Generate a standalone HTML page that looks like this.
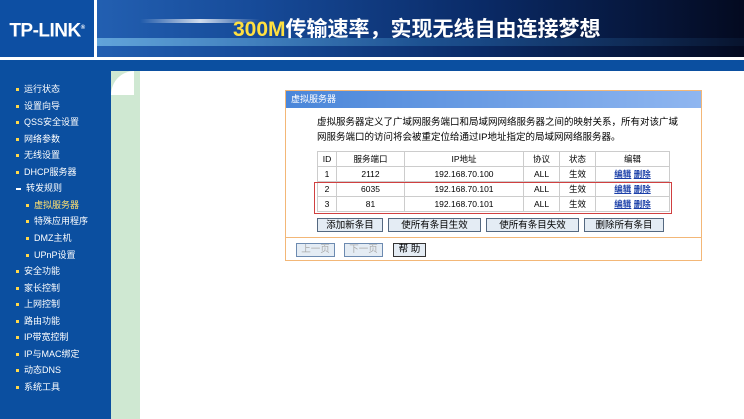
<!DOCTYPE html><html><head><meta charset="utf-8"><style>
body{margin:0;width:744px;height:419px;overflow:hidden;background:#fff;font-family:"Liberation Sans","Noto Sans CJK SC",sans-serif;position:relative}
.a{position:absolute}
#hd{left:0;top:0;width:744px;height:57px;background:linear-gradient(90deg,#2a6cc0 0%,#164a98 35%,#0a2a66 65%,#040a20 100%)}
#logo{left:0;top:0;width:97px;height:57px;background:#0d4fa3;border-right:3px solid #fff;box-sizing:border-box;color:#fff;font-weight:bold;font-size:19px;line-height:57px;text-align:center;letter-spacing:-0.5px}
#bar{left:0;top:60px;width:744px;height:11px;background:#0b4fa0}
#side{left:0;top:71px;width:111px;height:348px;background:#0b4fa0}
#green{left:111px;top:71px;width:29px;height:348px;background:#cfe8d2}
#corner{left:111px;top:71px;width:23px;height:24px;background:#fff;border-top-left-radius:23px 24px}
.m{position:absolute;font-size:9px;color:#fff;white-space:nowrap}
.m b{display:inline-block;width:3px;height:3px;background:#ffd84a;margin-right:5px;vertical-align:middle}
#panel{left:285px;top:90px;width:415px;height:169px;border:1px solid #f3b777;background:#fff}
#ttl{left:0;top:0;width:415px;height:17px;background:linear-gradient(90deg,#4a86d9,#8fb6f0);color:#fff;font-size:9px;line-height:17px;padding-left:5px;box-sizing:border-box}
.tx{font-size:9.5px;color:#000;line-height:15px}
table{border-collapse:collapse;font-size:8.5px;position:absolute;left:31px;top:60px;width:353px}
td{border:1px solid #ccc;height:14px;padding:0;text-align:center;color:#000}
a{color:#1b3fa8;text-decoration:underline;font-weight:bold}
.bt{position:absolute;top:127px;height:14px;border:1px solid #546880;background:#e4ecf4;font-size:9.5px;text-align:center;line-height:13px;box-sizing:border-box}
.b2{position:absolute;top:152px;height:14px;border:1px solid #6c8ab0;background:#e4ecf4;font-size:9.5px;text-align:center;line-height:12px;box-sizing:border-box}
</style></head><body>
<div class="a" id="hd"></div>
<div class="a" style="left:97px;top:38px;width:647px;height:8px;background:linear-gradient(90deg,rgba(140,210,245,.6),rgba(60,140,200,.35),rgba(40,100,160,.1))"></div>
<div class="a" style="left:140px;top:19px;width:120px;height:4px;background:linear-gradient(90deg,transparent,rgba(255,255,255,.8),transparent)"></div>
<div class="a" id="logo">TP-LINK<sup style="font-size:6px">®</sup></div>
<div class="a" style="left:233px;top:13px;font-size:21px;font-weight:bold;color:#fff;white-space:nowrap"><span style="color:#ffe040">300M</span>传输速率，实现无线自由连接梦想</div>
<div class="a" id="bar"></div>
<div class="a" id="side"></div>
<div class="a" id="green"></div>
<div class="a" id="corner"></div>
<div class="m" style="left:16px;top:82px"><b></b>运行状态</div>
<div class="m" style="left:16px;top:99px"><b></b>设置向导</div>
<div class="m" style="left:16px;top:115px"><b></b>QSS安全设置</div>
<div class="m" style="left:16px;top:132px"><b></b>网络参数</div>
<div class="m" style="left:16px;top:148px"><b></b>无线设置</div>
<div class="m" style="left:16px;top:165px"><b></b>DHCP服务器</div>
<div class="m" style="left:16px;top:181px"><b style="width:5px;height:2px;background:#fff"></b>转发规则</div>
<div class="m" style="left:26px;top:198px;color:#ffe070"><b></b>虚拟服务器</div>
<div class="m" style="left:26px;top:214px"><b></b>特殊应用程序</div>
<div class="m" style="left:26px;top:231px"><b></b>DMZ主机</div>
<div class="m" style="left:26px;top:248px"><b></b>UPnP设置</div>
<div class="m" style="left:16px;top:264px"><b></b>安全功能</div>
<div class="m" style="left:16px;top:281px"><b></b>家长控制</div>
<div class="m" style="left:16px;top:297px"><b></b>上网控制</div>
<div class="m" style="left:16px;top:314px"><b></b>路由功能</div>
<div class="m" style="left:16px;top:330px"><b></b>IP带宽控制</div>
<div class="m" style="left:16px;top:347px"><b></b>IP与MAC绑定</div>
<div class="m" style="left:16px;top:363px"><b></b>动态DNS</div>
<div class="m" style="left:16px;top:380px"><b></b>系统工具</div>
<div class="a" id="panel">
<div class="a" id="ttl">虚拟服务器</div>
<div class="a tx" style="left:31px;top:24px;width:370px">虚拟服务器定义了广域网服务端口和局域网网络服务器之间的映射关系，所有对该广域网服务端口的访问将会被重定位给通过IP地址指定的局域网网络服务器。</div>
<table>
<tr><td style="width:18px">ID</td><td style="width:67px">服务端口</td><td style="width:118px">IP地址</td><td style="width:35px">协议</td><td style="width:35px">状态</td><td>编辑</td></tr>
<tr><td>1</td><td>2112</td><td>192.168.70.100</td><td>ALL</td><td>生效</td><td><a>编辑</a> <a>删除</a></td></tr>
<tr><td>2</td><td>6035</td><td>192.168.70.101</td><td>ALL</td><td>生效</td><td><a>编辑</a> <a>删除</a></td></tr>
<tr><td>3</td><td>81</td><td>192.168.70.101</td><td>ALL</td><td>生效</td><td><a>编辑</a> <a>删除</a></td></tr>
</table>
<div class="a" style="left:28px;top:91px;width:356px;height:30px;border:1px solid #d04040"></div>
<div class="bt" style="left:31px;width:66px">添加新条目</div>
<div class="bt" style="left:102px;width:93px">使所有条目生效</div>
<div class="bt" style="left:200px;width:93px">使所有条目失效</div>
<div class="bt" style="left:298px;width:80px">删除所有条目</div>
<div class="a" style="left:0;top:146px;width:415px;height:1px;background:#f3b777"></div>
<div class="b2" style="left:10px;width:39px;color:#aaa">上一页</div>
<div class="b2" style="left:58px;width:39px;color:#aaa">下一页</div>
<div class="b2" style="left:107px;width:33px;border-color:#333">帮 助</div>
</div>
</body></html>
